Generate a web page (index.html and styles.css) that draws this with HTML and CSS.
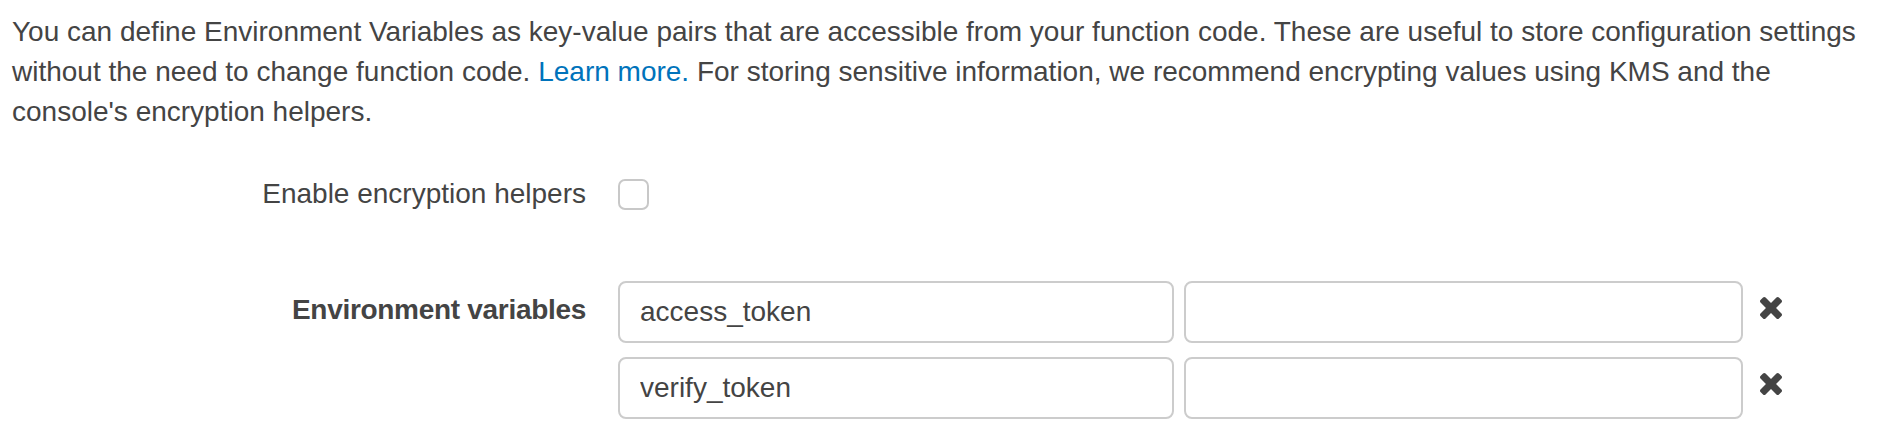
FILE: index.html
```html
<!DOCTYPE html>
<html lang="en">
<head>
<meta charset="utf-8">
<title>Environment variables</title>
<link rel="stylesheet" href="styles.css">
</head>
<body>
<div class="page">
  <p class="intro">You can define Environment Variables as key-value pairs that are accessible from your function code. These are useful to store configuration settings<br>without the need to change function code. <a class="link" href="#">Learn more.</a> For storing sensitive information, we recommend encrypting values using KMS and the<br>console's encryption helpers.</p>

  <div class="form-row row-check">
    <label class="row-label" for="enc">Enable encryption helpers</label>
    <div class="controls">
      <input class="checkbox" type="checkbox" id="enc">
    </div>
  </div>

  <div class="form-row row-env">
    <div class="row-label label-bold">Environment variables</div>
    <div class="controls env-list">
      <div class="env-item">
        <input class="field field-key" type="text" value="access_token">
        <input class="field field-value" type="text" value="">
        <button class="remove" type="button" aria-label="Remove">
          <svg viewBox="302 366 1188 1188" width="22" height="22"><path fill="currentColor" d="M1490 1322q0 40-28 68l-136 136q-28 28-68 28t-68-28l-294-294-294 294q-28 28-68 28t-68-28l-136-136q-28-28-28-68t28-68l294-294-294-294q-28-28-28-68t28-68l136-136q28-28 68-28t68 28l294 294 294-294q28-28 68-28t68 28l136 136q28 28 28 68t-28 68l-294 294 294 294q28 28 28 68z"/></svg>
        </button>
      </div>
      <div class="env-item">
        <input class="field field-key" type="text" value="verify_token">
        <input class="field field-value" type="text" value="">
        <button class="remove" type="button" aria-label="Remove">
          <svg viewBox="302 366 1188 1188" width="22" height="22"><path fill="currentColor" d="M1490 1322q0 40-28 68l-136 136q-28 28-68 28t-68-28l-294-294-294 294q-28 28-68 28t-68-28l-136-136q-28-28-28-68t28-68l294-294-294-294q-28-28-28-68t28-68l136-136q28-28 68-28t68 28l294 294 294-294q28-28 68-28t68 28l136 136q28 28 28 68t-28 68l-294 294 294 294q28 28 28 68z"/></svg>
        </button>
      </div>
    </div>
  </div>
</div>
</body>
</html>
```

FILE: styles.css
```css
html, body {
  margin: 0;
  padding: 0;
  background: #ffffff;
}

body {
  font-family: "Liberation Sans", Arial, Helvetica, sans-serif;
  font-size: 28px;
  line-height: 40px;
  color: #444444;
}

.page {
  padding-top: 12px;
}

.intro {
  margin: 0 12px;
  white-space: nowrap;
}

.link {
  color: #0073bb;
  text-decoration: none;
}

.form-row {
  display: grid;
  grid-template-columns: 586px 1fr;
  column-gap: 32px;
}

.row-label {
  text-align: right;
  white-space: nowrap;
}

.label-bold {
  font-weight: bold;
  letter-spacing: -0.3px;
}

.row-check {
  margin-top: 42px;
  align-items: center;
  height: 40px;
}

.row-check .controls {
  display: flex;
  align-items: center;
}

.checkbox {
  -webkit-appearance: none;
  appearance: none;
  margin: 0;
  width: 31px;
  height: 31px;
  border: 2px solid #c8c8c8;
  border-radius: 7px;
  background: #ffffff;
  box-sizing: border-box;
}

.row-env {
  margin-top: 67px;
}

.row-env .row-label {
  padding-top: 9px;
}

.env-list {
  display: flex;
  flex-direction: column;
  gap: 14px;
}

.env-item {
  display: flex;
  align-items: flex-start;
}

.field {
  box-sizing: border-box;
  height: 62px;
  margin: 0;
  padding: 0 20px;
  border: 2px solid #cccccc;
  border-radius: 8px;
  background: #ffffff;
  font-family: "Liberation Sans", Arial, Helvetica, sans-serif;
  font-size: 28px;
  color: #444444;
  outline: none;
}

.field-key {
  width: 556px;
}

.field-value {
  width: 559px;
  margin-left: 10px;
}

.remove {
  margin: 16px 0 0 17px;
  padding: 0;
  border: 0;
  background: none;
  color: #444444;
  width: 22px;
  height: 22px;
  display: flex;
  cursor: pointer;
}

.remove svg {
  display: block;
}
```
